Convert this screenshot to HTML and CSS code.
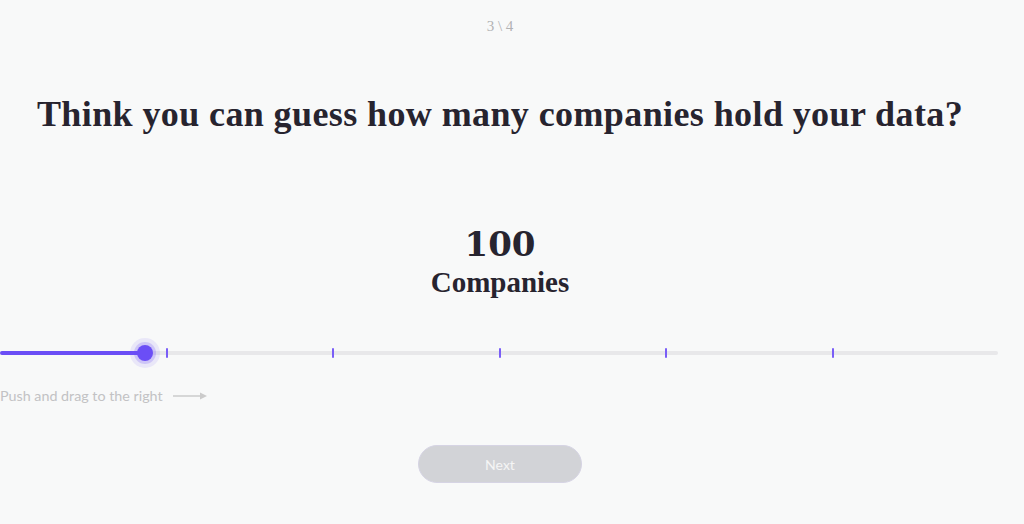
FILE: index.html
```html
<!DOCTYPE html>
<html lang="en">
<head>
	<meta charset="UTF-8">
	<title>Guess</title>
	<link rel="stylesheet" href="styles.css">
</head>
<body>
	<div class="quiz">
		<div class="quiz-step">3 \ 4</div>
		<h1 class="quiz-title">Think you can guess how many companies hold your data?</h1>

		<div class="quiz-value">
			<div class="quiz-value-num">100</div>
			<div class="quiz-value-unit">Companies</div>
		</div>

		<div class="slider">
			<div class="slider-track">
				<div class="slider-fill"></div>
				<span class="slider-tick" style="left: 166px"></span>
				<span class="slider-tick" style="left: 332px"></span>
				<span class="slider-tick" style="left: 499px"></span>
				<span class="slider-tick" style="left: 665px"></span>
				<span class="slider-tick" style="left: 832px"></span>
				<div class="slider-thumb"></div>
			</div>
		</div>

		<div class="slider-hint">
			<span>Push and drag to the right</span>
			<svg width="35" height="10" viewBox="0 0 35 10">
				<path d="M0 5H31" stroke="#cbcbcb" stroke-width="1.5"/>
				<path d="M27 1.5L34 5L27 8.5Z" fill="#cbcbcb"/>
			</svg>
		</div>

		<div class="quiz-actions">
			<button class="btn-next" type="button">Next</button>
		</div>
	</div>
</body>
</html>
```

FILE: styles.css
```css
* {
	margin: 0;
	padding: 0;
	box-sizing: border-box;
}
body {
	background: #f8f9f9;
	font-family: "Lato", "Liberation Sans", sans-serif;
	color: #26232e;
}

.quiz {
	width: 1000px;
	padding-top: 16px;
}
.quiz-step {
	text-align: center;
	font-family: "Liberation Serif", serif;
	font-size: 15px;
	line-height: 20px;
	color: #b2b2b4;
}
.quiz-title {
	margin-top: 54px;
	text-align: center;
	font-family: "Liberation Serif", serif;
	font-weight: bold;
	font-size: 36px;
	line-height: 48px;
	letter-spacing: 0.4px;
	color: #27242f;
}

.quiz-value {
	margin-top: 86px;
	text-align: center;
	font-family: "Liberation Serif", serif;
	font-weight: bold;
	color: #27242f;
}
.quiz-value-num {
	font-family: "DejaVu Serif", serif;
	font-size: 34px;
	line-height: 40px;
}
.quiz-value-unit {
	margin-top: 1px;
	font-size: 29px;
	line-height: 34px;
}

.slider {
	margin-top: 46px;
	padding: 6px 0;
}
.slider-track {
	position: relative;
	width: 998px;
	height: 4px;
	border-radius: 2px;
	background: #e8e8ea;
}
.slider-fill {
	width: 145px;
	height: 100%;
	border-radius: 2px;
	background: #6b4ef6;
}
.slider-tick {
	position: absolute;
	top: -3px;
	width: 2px;
	height: 10px;
	border-radius: 1px;
	background: #7a5ef7;
}
.slider-thumb {
	position: absolute;
	left: 137px;
	top: -6px;
	width: 16px;
	height: 16px;
	border-radius: 50%;
	background: #6b4ef6;
	box-shadow: 0 0 0 3px rgba(107, 78, 246, 0.22), 0 0 0 7px rgba(107, 78, 246, 0.1);
}

.slider-hint {
	display: flex;
	align-items: center;
	gap: 10px;
	margin-top: 25px;
	font-size: 14.3px;
	line-height: 20px;
	color: #c2c2c4;
}

.quiz-actions {
	display: flex;
	justify-content: center;
	margin-top: 39px;
}
.btn-next {
	width: 164px;
	height: 38px;
	border: 1px solid #d6d4e4;
	border-radius: 19px;
	background: #d2d3d7;
	color: #f5f5f5;
	font-family: "Lato", sans-serif;
	font-size: 14px;
}
```
